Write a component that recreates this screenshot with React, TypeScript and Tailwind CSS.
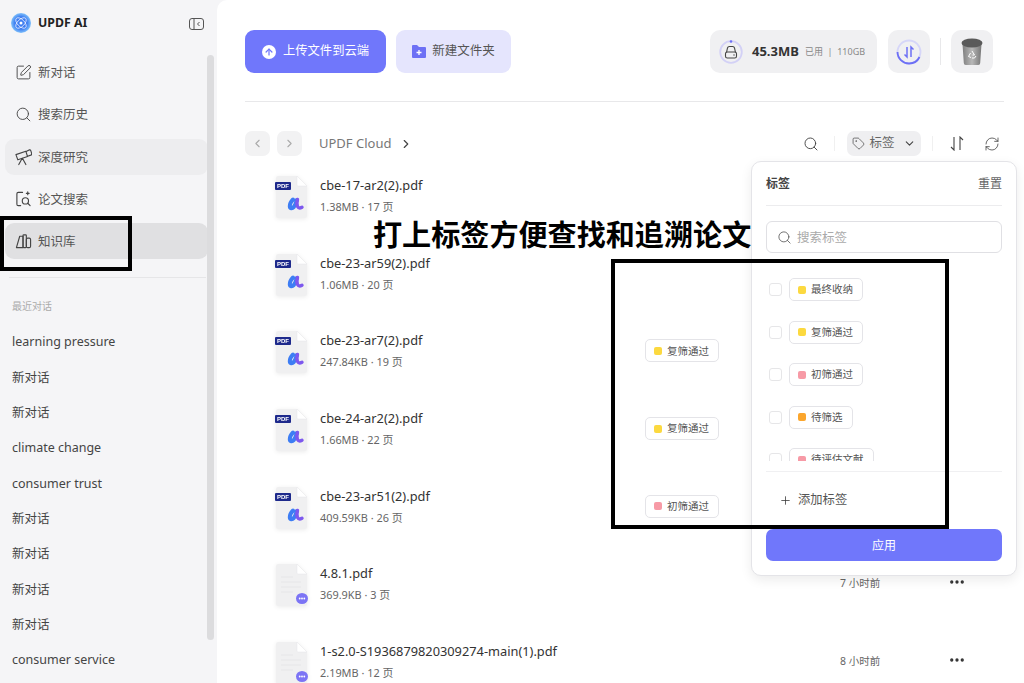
import React from "react";
import { SquarePen, Search, Tag, ChevronDown, ChevronLeft, ChevronRight, RefreshCw, MoreHorizontal, Plus, ArrowUp } from "lucide-react";

const TelescopeIcon = () => (
  <svg width="17" height="18" viewBox="0 0 18 18" fill="none" stroke="#444" strokeWidth="1.2" strokeLinejoin="round" strokeLinecap="round" className="shrink-0">
    <path d="M1 6.5l10.5-3.5 1.8 5.5L3 12z" />
    <path d="M11.8 3.2L15 1.5a1.5 1.5 0 0 1 1.8 1l.8 2.7a1.5 1.5 0 0 1-.9 1.8l-3.4 1.2" />
    <path d="M7.5 10.5L4 17M8 10.5L11.5 17" />
  </svg>
);
const PaperSearchIcon = () => (
  <svg width="17" height="18" viewBox="0 0 18 18" fill="none" stroke="#444" strokeWidth="1.2" strokeLinecap="round" className="shrink-0">
    <path d="M8 2H3.5A1.5 1.5 0 0 0 2 3.5v11A1.5 1.5 0 0 0 3.5 16H6" />
    <circle cx="11" cy="11" r="3.3" />
    <path d="M13.5 13.5L16 16M13.5 1.5v3M12 3h3" />
  </svg>
);
const LibraryIcon = () => (
  <svg width="17" height="18" viewBox="0 0 18 18" fill="none" stroke="#444" strokeWidth="1.2" strokeLinejoin="round" className="shrink-0">
    <path d="M5 4h3.500v12H1.500z" />
    <rect x="8.500" y="2.500" width="3.500" height="13.500" rx="0.800" />
    <rect x="12" y="6" width="4.500" height="10" rx="1.500" />
  </svg>
);
const NewChat = () => <SquarePen size={17} strokeWidth={1.3} className="shrink-0 text-[#444]" />;
const SearchNav = () => <Search size={17} strokeWidth={1.3} className="shrink-0 text-[#444]" />;

const nav = [
  { t: "新对话", I: NewChat, c: "" },
  { t: "搜索历史", I: SearchNav, c: "" },
  { t: "深度研究", I: TelescopeIcon, c: "bg-[#ededef]" },
  { t: "论文搜索", I: PaperSearchIcon, c: "" },
  { t: "知识库", I: LibraryIcon, c: "bg-[#e0e0e2]" },
];
const recent = ["learning pressure", "新对话", "新对话", "climate change", "consumer trust", "新对话", "新对话", "新对话", "新对话", "consumer service"];
const files = [
  { n: "cbe-17-ar2(2).pdf", m: "1.38MB · 17 页", u: true },
  { n: "cbe-23-ar59(2).pdf", m: "1.06MB · 20 页", u: true },
  { n: "cbe-23-ar7(2).pdf", m: "247.84KB · 19 页", u: true, tag: ["复筛通过", "bg-[#fcd93f]"] },
  { n: "cbe-24-ar2(2).pdf", m: "1.66MB · 22 页", u: true, tag: ["复筛通过", "bg-[#fcd93f]"] },
  { n: "cbe-23-ar51(2).pdf", m: "409.59KB · 26 页", u: true, tag: ["初筛通过", "bg-[#f79aa6]"] },
  { n: "4.8.1.pdf", m: "369.9KB · 3 页", u: false, time: "7 小时前" },
  { n: "1-s2.0-S1936879820309274-main(1).pdf", m: "2.19MB · 12 页", u: false, time: "8 小时前" },
];
const tags = [
  ["最终收纳", "bg-[#fcd93f]"],
  ["复筛通过", "bg-[#fcd93f]"],
  ["初筛通过", "bg-[#f79aa6]"],
  ["待筛选", "bg-[#fba62d]"],
  ["待评估文献", "bg-[#f79aa6]"],
];

function TagChip({ t, c }: { t: string; c: string }) {
  return (
    <div className="flex h-[23px] items-center gap-[5px] whitespace-nowrap rounded-[5px] border border-[#e4e4e8] bg-white pl-[8px] pr-[9px] text-[10.5px] leading-none text-[#555]">
      <span className={`h-[8px] w-[8px] rounded-[2px] ${c}`} />
      {t}
    </div>
  );
}

function FileIcon({ u }: { u: boolean }) {
  return (
    <svg width="33" height="42" viewBox="0 0 33 42" className="shrink-0 drop-shadow-[0_1px_2px_rgba(0,0,0,0.08)]">
      <path d="M3 0h19l10 10v30a2 2 0 0 1-2 2H3a2 2 0 0 1-2-2V2a2 2 0 0 1 2-2z" fill="#f0f0f1" />
      <path d="M22 0l10 10H23a1 1 0 0 1-1-1z" fill="#ffffff" stroke="#e6e6e8" strokeWidth="0.5" />
      {u ? (
        <>
          <rect x="0" y="6" width="16" height="8" rx="1" fill="#1e2a8c" />
          <text x="8" y="12.3" textAnchor="middle" fontSize="6" fontWeight="700" fill="#fff" fontFamily="Liberation Sans, sans-serif">PDF</text>
          <path d="M18 23.500c-2 2-3.200 4.500-3.200 6.800s2.400 2.500 3.900.8 2.500-4 3-7" fill="none" stroke="#3d7df4" strokeWidth="4" strokeLinecap="round" />
          <path d="M22.500 23.500c-.8 3-1 5.200 0 7s3 1.600 4.500.8" fill="none" stroke="#7d58ee" strokeWidth="3.400" strokeLinecap="round" />
        </>
      ) : (
        <>
          <path d="M6 13h12M6 18h20M6 23h20M6 28h12" stroke="#e6e6e8" strokeWidth="1" />
          <ellipse cx="27" cy="34.500" rx="6" ry="5.500" fill="#7c74f5" />
          <circle cx="24.700" cy="34.500" r="0.900" fill="#fff" /><circle cx="27" cy="34.500" r="0.900" fill="#fff" /><circle cx="29.300" cy="34.500" r="0.900" fill="#fff" />
        </>
      )}
    </svg>
  );
}

export default function App() {
  return (
    <div className="relative flex h-[683px] w-[1024px] overflow-hidden bg-[#f5f5f7] text-[#333]" style={{ fontFamily: '"Noto Sans", "Noto Sans CJK SC", sans-serif' }}>
      {/* Sidebar */}
      <aside className="relative flex w-[217px] shrink-0 flex-col">
        <div className="flex h-[46px] items-center pl-[11px] pr-[12px]">
          <svg width="20" height="20" viewBox="0 0 20 20">
            <defs>
              <radialGradient id="lg"><stop offset="0.6" stopColor="#3c7cf0" /><stop offset="1" stopColor="#7fc0fb" /></radialGradient>
            </defs>
            <circle cx="10" cy="10" r="10" fill="url(#lg)" />
            <ellipse cx="10" cy="10" rx="6.500" ry="3.500" fill="none" stroke="#dfe8ff" strokeWidth="0.900" transform="rotate(45 10 10)" />
            <ellipse cx="10" cy="10" rx="6.500" ry="3.500" fill="none" stroke="#dfe8ff" strokeWidth="0.900" transform="rotate(-45 10 10)" />
            <circle cx="10" cy="10" r="1.500" fill="#fff" />
          </svg>
          <span className="ml-[7px] text-[12.3px] font-bold text-[#222]">UPDF AI</span>
          <svg width="15" height="12" viewBox="0 0 15 12" className="ml-auto mr-[1px] mt-[2px]" fill="none" stroke="#555" strokeWidth="1">
            <rect x="0.5" y="0.5" width="14" height="11" rx="2.500" />
            <path d="M5 1v10M10.500 4l-2 2 2 2" />
          </svg>
        </div>
        <nav className="mt-[8px] flex flex-col gap-[6.3px] pl-[5px] pr-[9px]">
          {nav.map(({ t, I, c }) => (
            <div key={t} className={`flex h-[36px] items-center gap-[6px] rounded-[9px] pl-[10px] text-[12.5px] leading-[38px] text-[#555] ${c}`}>
              <I />
              <span className="pt-[2px]">{t}</span>
            </div>
          ))}
        </nav>
        <div className="ml-[9px] mr-[11px] mt-[18px] border-t border-[#e6e6e8]" />
        <div className="mt-[21px] pl-[12px] text-[10px] leading-[14px] text-[#aaa]">最近对话</div>
        <div className="mt-[12px] flex flex-col">
          {recent.map((r, i) => (
            <div key={i} className="flex h-[35.3px] shrink-0 items-center whitespace-nowrap pl-[12px] text-[12.5px] text-[#444]">{r}</div>
          ))}
        </div>
        <div className="absolute left-[207px] top-[55px] h-[585px] w-[7px] rounded-full bg-[#dcdcde]" />
      </aside>

      {/* Main */}
      <main className="flex flex-1 flex-col rounded-tl-[10px] bg-white pl-[28px] pr-[20px]">
        <div className="flex h-[102px] shrink-0 items-start border-b border-[#e8e8ea] pt-[30px]">
          <div className="flex h-[43px] w-[141px] items-center justify-center gap-[7px] rounded-[9px] bg-[#7077fb] text-[12.3px] text-white">
            <span className="flex h-[14px] w-[14px] items-center justify-center rounded-full bg-white">
              <ArrowUp size={10} strokeWidth={3} className="text-[#7077fb]" />
            </span>
            上传文件到云端
          </div>
          <div className="ml-[10px] flex h-[43px] w-[115px] items-center justify-center gap-[6px] rounded-[9px] bg-[#e5e5fd] text-[12.5px] text-[#555]">
            <svg width="14" height="13" viewBox="0 0 14 13"><path d="M1 0h4l2 2h6a1 1 0 0 1 1 1v9a1 1 0 0 1-1 1H1a1 1 0 0 1-1-1V1a1 1 0 0 1 1-1z" fill="#6d70f5" /><path d="M7 5v5M4.500 7.500h5" stroke="#fff" strokeWidth="1.300" /></svg>
            新建文件夹
          </div>
          <div className="ml-auto flex h-[43px] w-[167px] items-center rounded-[10px] bg-[#f0f0f2] pl-[9px]">
            <svg width="24" height="24" viewBox="0 0 24 24" fill="none" className="shrink-0">
              <circle cx="12" cy="12" r="10.800" stroke="#d3d1f6" strokeWidth="1.800" />
              <circle cx="12" cy="1.500" r="1.300" fill="#6d70f5" />
              <path d="M7.500 12.500l1-4.500a2 2 0 0 1 2-1.500h3a2 2 0 0 1 2 1.500l1 4.500" stroke="#444" strokeWidth="1.100" />
              <rect x="6.500" y="12" width="11" height="6" rx="1.800" stroke="#444" strokeWidth="1.100" />
              <circle cx="15" cy="15" r="0.700" fill="#444" />
            </svg>
            <span className="ml-[9px] text-[13px] font-bold text-[#333]">45.3MB</span>
            <span className="ml-[6px] whitespace-nowrap text-[9px] text-[#888]">已用 &nbsp;|&nbsp; 110GB</span>
          </div>
          <div className="ml-[11px] flex h-[43px] w-[42px] items-center justify-center rounded-[10px] bg-[#f0f0f2]">
            <svg width="26" height="26" viewBox="0 0 26 26" fill="none">
              <circle cx="13" cy="13" r="11.500" stroke="#d6d6f8" strokeWidth="1.800" />
              <path d="M1.500 13A11.500 11.500 0 0 0 13 24.500 11.500 11.500 0 0 0 23.500 18" stroke="#6d70f5" strokeWidth="1.800" />
              <path d="M11 8v10l-2.500-2.500M15 18V8l2.500 2.500" stroke="#6d70f5" strokeWidth="1.500" />
            </svg>
          </div>
          <div className="mx-[10px] mt-[8px] h-[27px] w-px bg-[#e8e8ea]" />
          <div className="mr-[11px] flex h-[43px] w-[42px] items-center justify-center rounded-[10px] bg-[#f0f0f2]">
            <svg width="22" height="27" viewBox="0 0 22 27">
              <defs>
                <linearGradient id="bin" x1="0" x2="1" y1="0" y2="0"><stop offset="0" stopColor="#7f7f7f" /><stop offset="0.5" stopColor="#b8b8b8" /><stop offset="1" stopColor="#777" /></linearGradient>
              </defs>
              <path d="M1.500 6h19l-1.300 19a2 2 0 0 1-2 2H4.800a2 2 0 0 1-2-2z" fill="url(#bin)" />
              <ellipse cx="11" cy="5" rx="10.500" ry="4.500" fill="#5a5a5a" />
              <path d="M11 13l2.500 4h-2M9.500 15l-2 3.500 2.500 1M15 18l-1.500 2H11" fill="none" stroke="#fff" strokeWidth="1" />
            </svg>
          </div>
        </div>

        <div className="mt-[29px] flex h-[25px] shrink-0 items-center">
          <span className="flex h-[25px] w-[25px] items-center justify-center rounded-[7px] bg-[#f2f2f3]"><ChevronLeft size={13} className="text-[#aaa]" /></span>
          <span className="ml-[7px] flex h-[25px] w-[25px] items-center justify-center rounded-[7px] bg-[#f2f2f3]"><ChevronRight size={13} className="text-[#aaa]" /></span>
          <span className="ml-[17px] text-[13px] text-[#777]">UPDF Cloud</span>
          <ChevronRight size={14} className="ml-[8px] text-[#444]" />
          <Search size={16} strokeWidth={1.4} className="ml-auto text-[#444]" />
          <span className="ml-[15px] mr-[12px] h-[15px] w-px bg-[#f0f0f0]" />
          <span className="flex h-[25px] w-[74px] items-center justify-center gap-[4px] rounded-[7px] bg-[#efeff1] text-[12.5px] text-[#666]">
            <Tag size={13} strokeWidth={1.3} className="text-[#444]" />标签<ChevronDown size={13} className="ml-[4px] text-[#444]" />
          </span>
          <span className="ml-[11px] mr-[17px] h-[15px] w-px bg-[#f0f0f0]" />
          <svg width="14" height="15" viewBox="0 0 14 15" fill="none" stroke="#444" strokeWidth="1.100"><path d="M4 1v13L1 11M10 14V1l3 3" /></svg>
          <RefreshCw size={16} strokeWidth={1.2} className="ml-[20px] mr-[4px] text-[#444]" />
        </div>

        <div className="mt-[11px] flex flex-col">
          {files.map((f) => (
            <div key={f.n} className="flex h-[77.7px] shrink-0 items-start pl-[30px] pt-[9px]">
              <FileIcon u={f.u} />
              <div className="ml-[12px] w-[325px] shrink-0">
                <div className="whitespace-nowrap text-[12.8px] leading-[18px] text-[#333]">{f.n}</div>
                <div className="mt-[5px] whitespace-nowrap text-[10.9px] leading-[16px] text-[#666]">{f.m}</div>
              </div>
              {f.tag ? (
                <div className="mt-[8px] w-fit">
                  <TagChip t={f.tag[0] as string} c={f.tag[1] as string} />
                </div>
              ) : null}
              {f.time ? (
                <>
                  <span className="absolute left-[840px] mt-[12px] text-[10.5px] text-[#666]">{f.time}</span>
                  <MoreHorizontal size={18} strokeWidth={2.4} className="absolute left-[948px] mt-[9px] text-[#333]" />
                </>
              ) : null}
            </div>
          ))}
        </div>
      </main>

      {/* Tag popover */}
      <div className="absolute left-[751px] top-[161px] flex h-[415px] w-[266px] flex-col rounded-[10px] border border-[#e4e4e8] bg-white px-[14px] shadow-[0_4px_12px_rgba(0,0,0,0.08)]">
        <div className="flex h-[44px] shrink-0 items-center justify-between border-b border-[#ececee]">
          <span className="text-[12px] font-bold text-[#444]">标签</span>
          <span className="text-[12px] text-[#666]">重置</span>
        </div>
        <div className="mt-[15px] flex h-[32px] shrink-0 items-center gap-[5px] rounded-[6px] border border-[#e0e0e4] pl-[10px] text-[12.5px] text-[#aaa]">
          <Search size={15} strokeWidth={1.3} className="text-[#555]" /><span className="pt-[2px]">搜索标签</span>
        </div>
        <div className="mt-[25px] shrink-0 border-b border-[#f0f0f2] pb-[10px]">
          <div className="flex h-[183px] flex-col gap-[19.5px] overflow-hidden">
            {tags.map(([t, c]) => (
              <div key={t} className="flex shrink-0 items-center pl-[3px]">
                <span className="mr-[7px] h-[13px] w-[13px] rounded-[3px] border border-[#e6e6e8]" />
                <TagChip t={t} c={c} />
              </div>
            ))}
          </div>
        </div>
        <div className="flex h-[56px] shrink-0 items-center gap-[6px] pl-[13px] text-[12.3px] text-[#555]">
          <Plus size={13} strokeWidth={1.4} className="text-[#333]" />添加标签
        </div>
        <div className="mt-[1px] flex h-[32px] shrink-0 items-center justify-center rounded-[7px] bg-[#7077fb] pt-[2px] text-[12px] text-white">应用</div>
      </div>

      {/* Annotations */}
      <div className="absolute left-[373px] top-[214px] whitespace-nowrap text-[29.1px] font-bold leading-[38px] text-black" style={{ fontFamily: '"Noto Sans CJK SC", sans-serif' }}>打上标签方便查找和追溯论文</div>
      <div className="pointer-events-none absolute left-[611px] top-[259px] h-[270px] w-[338px] border-[4px] border-black" />
      <div className="pointer-events-none absolute left-0 top-[216px] h-[55px] w-[132px] border-[4px] border-black" />
    </div>
  );
}
